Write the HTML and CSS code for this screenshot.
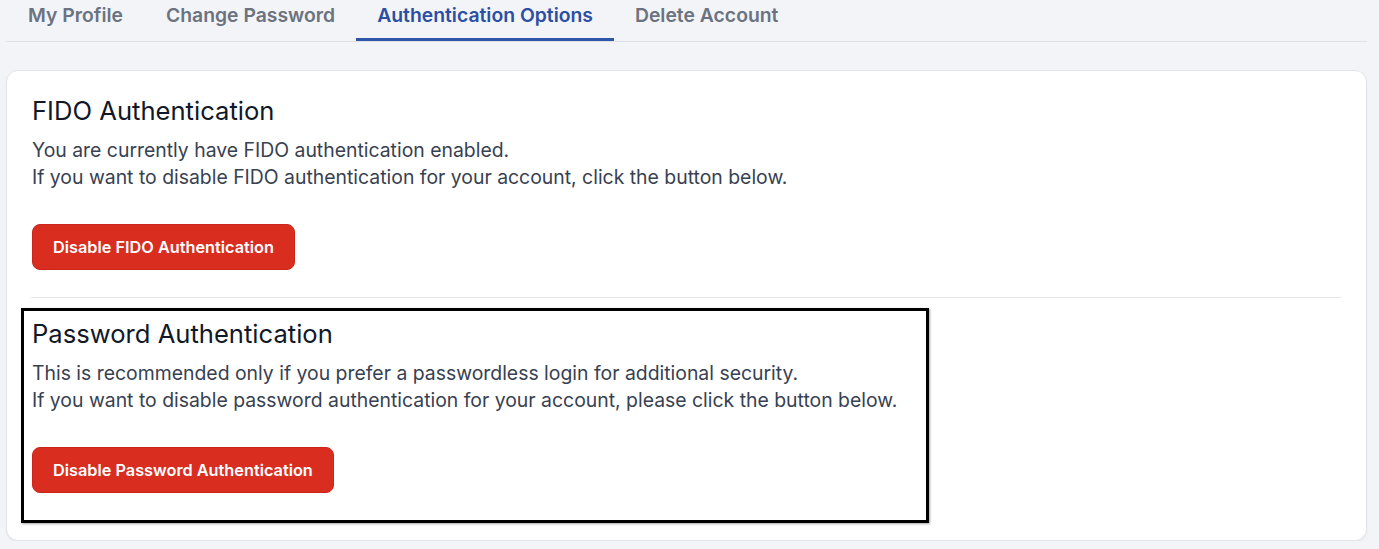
FILE: index.html
```html
<!DOCTYPE html>
<html lang="en">
<head>
<meta charset="utf-8">
<title>Authentication Options</title>
<link rel="stylesheet" href="styles.css">
</head>
<body>
<div class="page">
  <nav class="tabs">
    <a class="tab">My Profile</a>
    <a class="tab">Change Password</a>
    <a class="tab active">Authentication Options</a>
    <a class="tab">Delete Account</a>
  </nav>
  <section class="card">
    <div class="section">
      <h2 class="title">FIDO Authentication</h2>
      <p class="text">You are currently have FIDO authentication enabled.<br>If you want to disable FIDO authentication for your account, click the button below.</p>
      <button class="btn">Disable FIDO Authentication</button>
    </div>
    <hr class="divider">
    <div class="section highlight">
      <h2 class="title">Password Authentication</h2>
      <p class="text">This is recommended only if you prefer a passwordless login for additional security.<br>If you want to disable password authentication for your account, please click the button below.</p>
      <button class="btn">Disable Password Authentication</button>
    </div>
  </section>
</div>
</body>
</html>
```

FILE: styles.css
```css
* { box-sizing: border-box; }
html, body { margin: 0; padding: 0; }
body {
  background: #f3f4f8;
  font-family: Inter, "Noto Sans", sans-serif;
  color: #111827;
}
.page {
  padding: 0 12px 0 6px;
}
.tabs {
  display: flex;
  border-bottom: 1px solid #dfe1e6;
  height: 42px;
}
.tab {
  display: block;
  padding: 3px 21px 12px;
  line-height: 24px;
  font-size: 19.35px;
  font-weight: 600;
  color: #6b7280;
  border-bottom: 3px solid transparent;
  white-space: nowrap;
  cursor: pointer;
}
.tab:first-child {
  padding-left: 22px;
  padding-right: 22px;
}
.tab.active {
  color: #2b4fa3;
  border-bottom-color: #2d55a8;
}
.card {
  margin-top: 28px;
  background: #fff;
  border: 1px solid #e3e5ea;
  border-radius: 12px;
  box-shadow: 0 1px 2px rgba(0,0,0,0.06);
  padding: 24px 25px 17px;
}
.title {
  margin: 0;
  font-size: 25.6px;
  line-height: 32px;
  font-weight: 400;
  color: #111827;
}
.text {
  margin: 10px 0 0;
  font-size: 19.4px;
  line-height: 26.5px;
  color: #374151;
}
.btn {
  margin-top: 34px;
  display: inline-block;
  height: 46px;
  padding: 0 20px;
  border: 1px solid #c9271b;
  border-radius: 8px;
  background: #d92d20;
  color: #fff;
  font-family: inherit;
  font-size: 16.3px;
  font-weight: 600;
  cursor: pointer;
}
.divider {
  margin: 27px 0 0 -1px;
  border: 0;
  border-top: 1px solid #e3e5ea;
}
.highlight {
  margin: 10px 0 0 -11px;
  width: 908px;
  border: 3px solid #000;
  box-shadow: 1px 1px 2px rgba(0,0,0,0.35);
  padding: 7px 8px 27px;
}
```
